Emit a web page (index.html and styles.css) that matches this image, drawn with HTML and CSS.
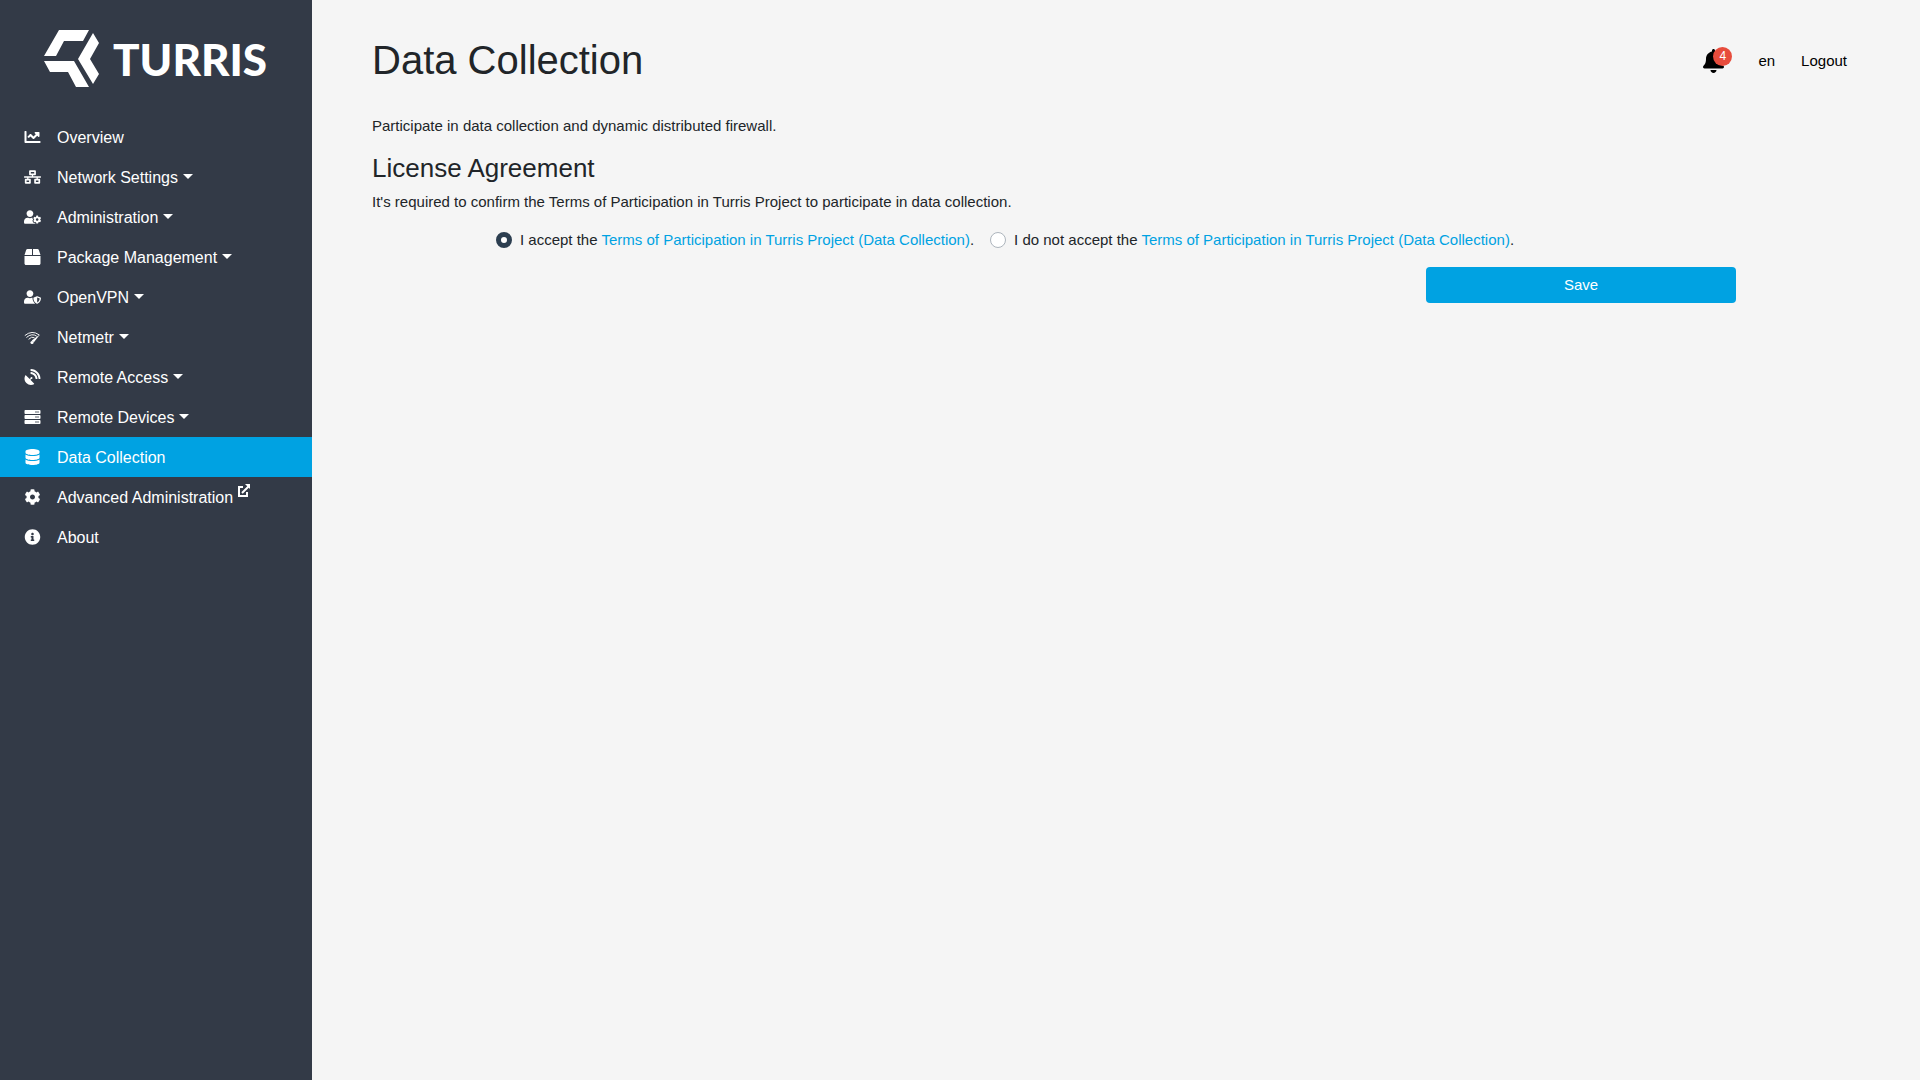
FILE: index.html
```html
<!DOCTYPE html>
<html lang="en">
<head>
<meta charset="utf-8">
<meta name="viewport" content="width=device-width, initial-scale=1">
<title>Data Collection - Turris</title>
<link rel="stylesheet" href="styles.css">
</head>
<body>
<aside class="sidebar">
  <a class="logo" href="#" aria-label="Turris">
    <svg class="logo-mark" viewBox="0 0 56 58" aria-hidden="true"><path d="M15 0H45L39 11H20L12 26H0ZM49 3 55 13 46 29 55 44 49 54 34 29ZM0 31H30L45 57H32L24 42H6Z"/></svg>
    <span class="logo-text">TURRIS</span>
  </a>
  <nav class="menu">
    <a class="item" href="#"><svg class="icon" viewBox="0 0 512 512"><path d="M496 384H64V80c0-8.84-7.16-16-16-16H16C7.16 64 0 71.16 0 80v336c0 17.67 14.33 32 32 32h464c8.84 0 16-7.16 16-16v-32c0-8.84-7.16-16-16-16zM464 96H345.94c-21.38 0-32.09 25.85-16.97 40.97l32.4 32.4L288 242.75l-73.37-73.37c-12.5-12.5-32.76-12.5-45.25 0l-68.69 68.69c-6.25 6.25-6.25 16.38 0 22.63l22.62 22.62c6.25 6.25 16.38 6.25 22.63 0L192 237.25l73.37 73.37c12.5 12.5 32.76 12.5 45.25 0l96-96 32.4 32.4c15.12 15.12 40.97 4.41 40.97-16.97V112c.01-8.84-7.15-16-15.99-16z"/></svg><span>Overview</span></a>
    <a class="item has-children" href="#"><svg class="icon" viewBox="0 0 640 512"><path d="M640 264v-16c0-8.84-7.16-16-16-16H344v-40h72c17.67 0 32-14.33 32-32V32c0-17.67-14.33-32-32-32H224c-17.67 0-32 14.33-32 32v128c0 17.67 14.33 32 32 32h72v40H16c-8.84 0-16 7.16-16 16v16c0 8.84 7.16 16 16 16h104v40H64c-17.67 0-32 14.33-32 32v128c0 17.67 14.33 32 32 32h160c17.67 0 32-14.33 32-32V352c0-17.67-14.33-32-32-32h-56v-40h304v40h-56c-17.67 0-32 14.33-32 32v128c0 17.67 14.33 32 32 32h160c17.67 0 32-14.33 32-32V352c0-17.67-14.33-32-32-32h-56v-40h104c8.84 0 16-7.16 16-16zM256 128V64h128v64H256zm-64 320H96v-64h96v64zm352 0h-96v-64h96v64z"/></svg><span>Network Settings</span></a>
    <a class="item has-children" href="#"><svg class="icon" viewBox="0 0 640 512"><path d="M610.5 373.3c2.6-14.1 2.6-28.5 0-42.6l25.8-14.9c3-1.7 4.3-5.2 3.3-8.5-6.7-21.6-18.2-41.2-33.2-57.4-2.3-2.5-6-3.1-9-1.4l-25.8 14.9c-10.9-9.3-23.4-16.5-36.9-21.3v-29.8c0-3.4-2.4-6.4-5.7-7.1-22.3-5-45-4.8-66.2 0-3.3.7-5.7 3.7-5.7 7.1v29.8c-13.5 4.8-26 12-36.9 21.3l-25.8-14.9c-2.9-1.7-6.7-1.1-9 1.4-15 16.2-26.5 35.8-33.2 57.4-1 3.3.4 6.8 3.3 8.5l25.8 14.9c-2.6 14.1-2.6 28.5 0 42.6l-25.8 14.9c-3 1.7-4.3 5.2-3.3 8.5 6.7 21.6 18.2 41.1 33.2 57.4 2.3 2.5 6 3.1 9 1.4l25.8-14.9c10.9 9.3 23.4 16.5 36.9 21.3v29.8c0 3.4 2.4 6.4 5.7 7.1 22.3 5 45 4.8 66.2 0 3.3-.7 5.7-3.7 5.7-7.1v-29.8c13.5-4.8 26-12 36.9-21.3l25.8 14.9c2.9 1.7 6.7 1.1 9-1.4 15-16.2 26.5-35.8 33.2-57.4 1-3.3-.4-6.8-3.3-8.5l-25.8-14.9zM496 400.5c-26.8 0-48.5-21.8-48.5-48.5s21.8-48.5 48.5-48.5 48.5 21.8 48.5 48.5-21.7 48.5-48.5 48.5zM224 256c70.7 0 128-57.3 128-128S294.7 0 224 0 96 57.3 96 128s57.3 128 128 128zm201.2 226.5c-2.3-1.2-4.6-2.6-6.8-3.9l-7.9 4.6c-6 3.4-12.8 5.3-19.6 5.3-10.9 0-21.4-4.6-28.9-12.6-18.3-19.8-32.3-43.9-40.2-69.6-5.5-17.7 1.9-36.4 17.9-45.7l7.9-4.6c-.1-2.6-.1-5.2 0-7.8l-7.9-4.6c-16-9.2-23.4-28-17.9-45.7.9-2.9 2.2-5.8 3.2-8.7-3.8-.3-7.5-1.2-11.4-1.2h-16.7c-22.2 10.2-46.9 16-72.9 16s-50.6-5.8-72.9-16h-16.7C60.2 288 0 348.2 0 422.4V464c0 26.5 21.5 48 48 48h352c10.1 0 19.5-3.2 27.2-8.5-1.2-3.8-2-7.7-2-11.8v-9.2z"/></svg><span>Administration</span></a>
    <a class="item has-children" href="#"><svg class="icon" viewBox="0 0 512 512"><path d="M509.5 184.6L458.9 32.8C452.4 13.2 434.1 0 413.4 0H272v192h238.7c-.4-2.5-.4-5-1.2-7.4zM240 0H98.6c-20.7 0-39 13.2-45.5 32.8L2.5 184.6c-.8 2.4-.8 4.9-1.2 7.4H240V0zM0 224v240c0 26.5 21.5 48 48 48h416c26.5 0 48-21.5 48-48V224H0z"/></svg><span>Package Management</span></a>
    <a class="item has-children" href="#"><svg class="icon" viewBox="0 0 640 512"><path d="M622.3 271.1l-115.2-45c-4.1-1.6-12.6-3.7-22.2 0l-115.2 45c-10.7 4.2-17.7 14-17.7 24.9 0 111.6 68.7 188.8 132.9 213.9 9.6 3.7 18 1.6 22.2 0C558.4 489.9 640 420.5 640 296c0-10.9-7-20.7-17.7-24.9zM496 462.4V273.3l95.5 37.3c-5.6 87.1-60.9 135.4-95.5 151.8zM224 256c70.7 0 128-57.3 128-128S294.7 0 224 0 96 57.3 96 128s57.3 128 128 128zm96 40c0-2.5.8-4.8 1.1-7.2-2.5-.1-4.9-.8-7.5-.8h-16.7c-22.2 10.2-46.9 16-72.9 16s-50.6-5.8-72.9-16h-16.7C60.2 288 0 348.2 0 422.4V464c0 26.5 21.5 48 48 48h352c6.8 0 13.3-1.5 19.2-4-54-42.9-99.2-116.7-99.2-212z"/></svg><span>OpenVPN</span></a>
    <a class="item has-children" href="#"><svg class="icon" viewBox="0 0 51 51"><g fill="none" stroke="#fff" stroke-width="3"><path d="M1 21Q24 2 47 19M6 27Q24 12 39 23M13 33Q23 22 32 28"/></g><path d="M50 17 30 42 23 37Z"/><circle cx="24" cy="43" r="5"/></svg><span>Netmetr</span></a>
    <a class="item has-children" href="#"><svg class="icon" viewBox="0 0 512 512"><path d="M305.4 462.6c7.4 7.3 6.2 20.1-3 25-77.7 41.8-176.7 29.9-242.3-35.7C-5.5 386.3-17.4 287.4 24.4 209.6c4.9-9.1 17.7-10.3 25-3L166.2 323.4l27.4-27.4c-.7-2.6-1.6-5-1.6-7.8a32 32 0 1 1 32 32c-2.8 0-5.2-.9-7.8-1.6l-27.4 27.4ZM512 303.1a16.1 16.1 0 0 1-16 17h-32.1a16 16 0 0 1-15.9-15C440.5 175.5 336.5 70.5 207 63.5a15.8 15.8 0 0 1-15-15.9V16A16.1 16.1 0 0 1 209 0C372.3 8.6 503.5 139.8 512 303.1Zm-96-.3a16.2 16.2 0 0 1-16.1 17.3h-32.3a16.1 16.1 0 0 1-15.9-14.7c-6.9-77-68.1-138.9-144.9-145.2A15.9 15.9 0 0 1 192 144.3v-32.2a16.1 16.1 0 0 1 17.3-16.1C319.5 104.5 407.6 192.6 416 302.8Z"/></svg><span>Remote Access</span></a>
    <a class="item has-children" href="#"><svg class="icon" viewBox="0 0 512 512"><path fill-rule="evenodd" d="M480 160H32c-17.7 0-32-14.3-32-32V64c0-17.7 14.3-32 32-32h448c17.7 0 32 14.3 32 32v64c0 17.7-14.3 32-32 32zm-48-88a24 24 0 1 0 0 48 24 24 0 0 0 0-48zm-64 0a24 24 0 1 0 0 48 24 24 0 0 0 0-48zM480 320H32c-17.7 0-32-14.3-32-32v-64c0-17.7 14.3-32 32-32h448c17.7 0 32 14.3 32 32v64c0 17.7-14.3 32-32 32zm-48-88a24 24 0 1 0 0 48 24 24 0 0 0 0-48zm-64 0a24 24 0 1 0 0 48 24 24 0 0 0 0-48zM480 480H32c-17.7 0-32-14.3-32-32v-64c0-17.7 14.3-32 32-32h448c17.7 0 32 14.3 32 32v64c0 17.7-14.3 32-32 32zm-48-88a24 24 0 1 0 0 48 24 24 0 0 0 0-48zm-64 0a24 24 0 1 0 0 48 24 24 0 0 0 0-48z"/></svg><span>Remote Devices</span></a>
    <a class="item active" href="#" aria-current="page"><svg class="icon" viewBox="0 0 448 512"><path d="M448 73.1v45.8C448 159.1 347.7 192 224 192S0 159.1 0 118.9V73.1C0 32.9 100.3 0 224 0s224 32.9 224 73.1zM448 176v102.9C448 319.1 347.7 352 224 352S0 319.1 0 278.9V176c48.1 33.1 136.2 48.6 224 48.6S399.9 209.1 448 176zm0 160v102.9C448 479.1 347.7 512 224 512S0 479.1 0 438.9V336c48.1 33.1 136.2 48.6 224 48.6S399.9 369.1 448 336z"/></svg><span>Data Collection</span></a>
    <a class="item" href="#"><svg class="icon" viewBox="0 0 512 512"><path d="M487.4 315.7l-42.6-24.6c4.3-23.2 4.3-47 0-70.2l42.6-24.6c4.9-2.8 7.1-8.6 5.5-14-11.1-35.6-30-67.8-54.7-94.6-3.8-4.1-10-5.1-14.8-2.3L380.8 110c-17.9-15.4-38.5-27.3-60.8-35.1V25.8c0-5.6-3.9-10.5-9.4-11.7-36.7-8.2-74.3-7.8-109.2 0-5.5 1.2-9.4 6.1-9.4 11.7V75c-22.2 7.9-42.8 19.8-60.8 35.1L88.7 85.5c-4.9-2.8-11-1.9-14.8 2.3-24.7 26.7-43.6 58.9-54.7 94.6-1.7 5.4.6 11.2 5.5 14L67.3 221c-4.3 23.2-4.3 47 0 70.2l-42.6 24.6c-4.9 2.8-7.1 8.6-5.5 14 11.1 35.6 30 67.8 54.7 94.6 3.8 4.1 10 5.1 14.8 2.3l42.6-24.6c17.9 15.4 38.5 27.3 60.8 35.1v49.2c0 5.6 3.9 10.5 9.4 11.7 36.7 8.2 74.3 7.8 109.2 0 5.5-1.2 9.4-6.1 9.4-11.7v-49.2c22.2-7.9 42.8-19.8 60.8-35.1l42.6 24.6c4.9 2.8 11 1.9 14.8-2.3 24.7-26.7 43.6-58.9 54.7-94.6 1.5-5.5-.7-11.3-5.6-14.1zM256 336c-44.1 0-80-35.9-80-80s35.9-80 80-80 80 35.9 80 80-35.9 80-80 80z"/></svg><span>Advanced Administration</span><svg class="external" viewBox="0 0 12 13" aria-hidden="true"><path fill="none" stroke="#fff" stroke-width="2" d="M5 3H1V12H9V8M4 9 11 2"/><path d="M7 0H12V5Z"/></svg></a>
    <a class="item" href="#"><svg class="icon" viewBox="0 0 512 512"><path d="M256 8C119 8 8 119.1 8 256c0 137 111 248 248 248s248-111 248-248C504 119.1 393 8 256 8zm0 110c23.2 0 42 18.8 42 42s-18.8 42-42 42-42-18.8-42-42 18.8-42 42-42zm56 254c0 6.6-5.4 12-12 12h-88c-6.6 0-12-5.4-12-12v-24c0-6.6 5.4-12 12-12h12v-64h-12c-6.6 0-12-5.4-12-12v-24c0-6.6 5.4-12 12-12h64c6.6 0 12 5.4 12 12v100h12c6.6 0 12 5.4 12 12v24z"/></svg><span>About</span></a>
  </nav>
</aside>
<main class="content">
  <header class="topbar">
    <h1>Data Collection</h1>
    <div class="actions">
      <button class="bell" type="button" aria-label="Notifications">
        <svg viewBox="0 0 448 512" aria-hidden="true"><path d="M224 512c35.3 0 63.9-28.7 63.9-64H160.1c0 35.3 28.6 64 63.9 64zm215.4-149.7c-19.3-20.8-55.5-52-55.5-154.3 0-77.7-54.5-139.9-127.9-155.2V32c0-17.7-14.3-32-32-32s-32 14.3-32 32v20.8C118.6 68.1 64.1 130.3 64.1 208c0 102.3-36.2 133.5-55.5 154.3-6 6.4-8.7 14.1-8.6 21.7.1 16.4 13 32 32.1 32h383.8c19.1 0 32-15.6 32.1-32 .1-7.6-2.6-15.3-8.6-21.7z"/></svg>
        <span class="badge">4</span>
      </button>
      <a href="#">en</a>
      <a href="#">Logout</a>
    </div>
  </header>
  <p>Participate in data collection and dynamic distributed firewall.</p>
  <h2>License Agreement</h2>
  <p>It's required to confirm the Terms of Participation in Turris Project to participate in data collection.</p>
  <form class="form">
    <div class="choices">
      <div class="choice"><input type="radio" name="agreed" id="accept" checked><label for="accept">I accept the <a href="#">Terms of Participation in Turris Project (Data Collection)</a>.</label></div>
      <div class="choice"><input type="radio" name="agreed" id="decline"><label for="decline">I do not accept the <a href="#">Terms of Participation in Turris Project (Data Collection)</a>.</label></div>
    </div>
    <button class="save" type="button">Save</button>
  </form>
</main>
</body>
</html>
```
FILE: styles.css
```css
* { box-sizing: border-box; }

body {
  display: flex;
  min-height: 100vh;
  margin: 0;
  background: #f5f5f5;
  color: #212529;
  font: 15px/22px "Liberation Sans", Arial, sans-serif;
}

a { color: #00a2e2; text-decoration: none; }
h1, h2, p { margin: 0; font-weight: 400; }

.sidebar {
  flex: 0 0 312px;
  background: #333a47;
}

.logo {
  display: flex;
  align-items: center;
  gap: 13px;
  height: 117px;
  padding-left: 44px;
  color: #fff;
}

.logo-mark { width: 56px; height: 58px; fill: #fff; }
.logo-text { font: 900 44px/58px Lato, sans-serif; }

.item {
  display: flex;
  align-items: center;
  height: 40px;
  padding-left: 24px;
  color: #fff;
  font-size: 16px;
}

.item span { padding-top: 2px; }
.item.active { background: #00a2e2; }

.icon {
  width: 17px;
  height: 16px;
  margin-right: 16px;
  fill: #fff;
}

.has-children::after {
  content: "";
  margin: 0 0 2px 5px;
  border: 5px solid transparent;
  border-top-color: #fff;
  border-bottom: 0;
}

.external {
  width: 12px;
  height: 13px;
  margin: 0 0 14px 5px;
  fill: #fff;
}

.content {
  flex: 1;
  padding: 36px 60px;
}

.topbar {
  display: flex;
  justify-content: space-between;
  align-items: center;
  margin-bottom: 31px;
}

h1 { font-size: 40px; line-height: 48px; }
h2 { margin: 16px 0 8px; font-size: 26px; line-height: 30px; }

.actions {
  display: flex;
  align-items: center;
  gap: 26px;
  padding: 2px 13px 0 0;
}

.actions a { color: #000; }

.bell {
  position: relative;
  width: 29px;
  height: 24px;
  padding: 0;
  border: 0;
  background: none;
}

.bell svg { display: block; width: 21px; height: 24px; }

.badge {
  position: absolute;
  top: -2px;
  right: 0;
  width: 19px;
  height: 19px;
  border-radius: 50%;
  background: #e74c3c;
  color: #fff;
  font: 12px/19px "Liberation Sans", Arial, sans-serif;
}

.form {
  display: flex;
  flex-direction: column;
  width: 83.3333%;
  margin: 16px auto 0;
}

.choices { display: flex; flex-wrap: wrap; gap: 16px; }
.choice { display: flex; align-items: center; gap: 8px; }

input[type="radio"] {
  appearance: none;
  width: 16px;
  height: 16px;
  margin: 0;
  border: 1px solid #adb5bd;
  border-radius: 50%;
  background: #fff;
}

input[type="radio"]:checked { border: 5px solid #2c3e50; }

.save {
  align-self: flex-end;
  width: 25%;
  height: 36px;
  margin-top: 16px;
  border: 0;
  border-radius: 4px;
  background: #00a2e2;
  color: #fff;
  font: inherit;
}
```
